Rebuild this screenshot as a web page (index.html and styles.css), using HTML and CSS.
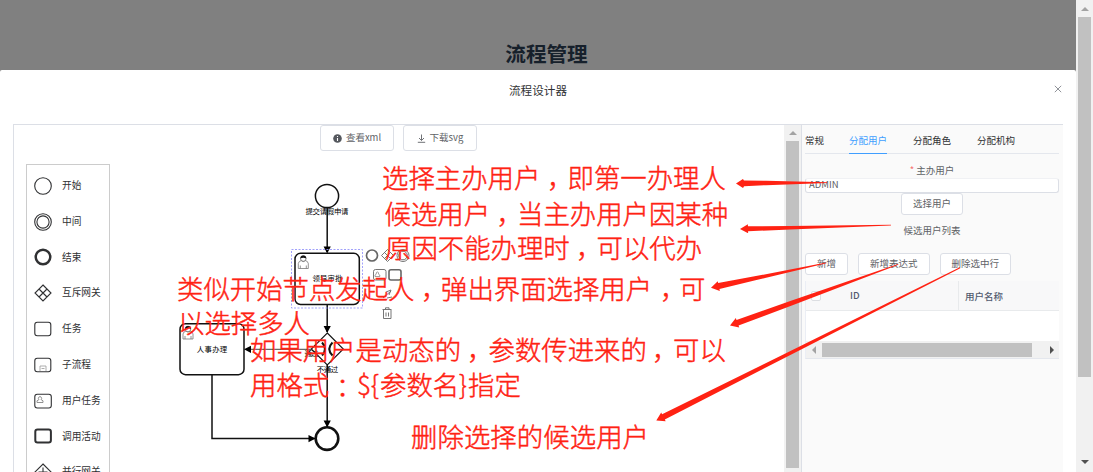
FILE: index.html
```html
<!DOCTYPE html>
<html lang="zh-CN">
<head>
<meta charset="utf-8">
<title>流程管理</title>
<link rel="stylesheet" href="styles.css">
</head>
<body>
<div class="window">
  <div class="page">
    <header class="page-head"><h1>流程管理</h1></header>
    <section class="dialog">
      <div class="dialog-head">
        <span class="dialog-title">流程设计器</span>
        <svg class="close" width="8" height="8" viewBox="0 0 8 8"><path d="M.8.8l6.4 6.4M7.2.8L.8 7.2"/></svg>
      </div>
      <div class="editor">
        <div class="canvas">
          <div class="toolbar">
            <button class="btn tool"><svg width="9" height="9" viewBox="0 0 9 9"><circle cx="4.5" cy="4.5" r="4.3" fill="#55585e"/><path d="M4.5 2v1M4.5 4v3" stroke="#fff" stroke-width="1.1"/></svg><span>查看xml</span></button>
            <button class="btn tool"><svg class="down" width="9" height="9" viewBox="0 0 9 9"><path d="M4.5.5v5.7M2 4l2.5 2.5L7 4M.8 8.3h7.4"/></svg><span>下载svg</span></button>
          </div>
          <ul class="palette">
            <li><svg viewBox="0 0 20 20"><circle cx="10" cy="10" r="8.3"/></svg>开始</li>
            <li><svg viewBox="0 0 20 20"><circle cx="10" cy="10" r="8.3"/><circle cx="10" cy="10" r="6.1"/></svg>中间</li>
            <li><svg viewBox="0 0 20 20"><circle cx="10" cy="10" r="7.3" stroke-width="2.5"/></svg>结束</li>
            <li><svg viewBox="0 0 20 20"><path d="M10 2l8 8-8 8-8-8zM6 6l8 8M14 6l-8 8"/></svg>互斥网关</li>
            <li><svg viewBox="0 0 20 20"><rect x="1.8" y="3.2" width="16" height="13.5" rx="2.5"/></svg>任务</li>
            <li><svg viewBox="0 0 20 20"><rect x="1.8" y="3.2" width="16" height="13.5" rx="2.5"/><path d="M7 16v-5h6v5M8.5 13.5h3" stroke="#999" stroke-width=".8"/></svg>子流程</li>
            <li><svg viewBox="0 0 20 20"><rect x="1.8" y="3.2" width="16.5" height="13.8" rx="2.5"/><path d="M4 11.5V9.8l2-1.3a1.6 1.6 0 1 1 2 0l2 1.3v1.7z" stroke="#777" stroke-width=".8"/></svg>用户任务</li>
            <li><svg viewBox="0 0 20 20"><rect x="2.3" y="3.4" width="15.6" height="13.2" rx="2.3" stroke-width="2"/></svg>调用活动</li>
            <li><svg viewBox="0 0 20 20"><path d="M10 2l8 8-8 8-8-8zM10 5.500v9M5.500 10h9"/></svg>并行网关</li>
          </ul>
          <svg class="diagram" width="770" height="347" viewBox="14 125 770 347">
            <defs>
              <g id="person"><path d="M-5 6.500V1.500Q-4.500-1-2-1.500Q0 .8 2-1.500Q4.500-1 5 1.500V6.500zM-3 6.500v-3M3 6.500v-3" fill="#fff" stroke="#777" stroke-width=".8"/><circle cy="-3.500" r="2.800" fill="#fff" stroke="#555" stroke-width=".7"/><path d="M-2.900-3.500Q-3-6.500 0-6.500T2.900-3.500Q0-5-2.900-3.500z" fill="#111"/></g>
            </defs>
            <g class="shape">
              <circle cx="327" cy="196" r="11.600"/>
              <rect x="295" y="253.300" width="64.300" height="51.200" rx="5.500"/>
              <rect x="180" y="323.700" width="64" height="51" rx="5.500"/>
              <path d="M327.300 333l16 16-16 16-16-16z" stroke-width="1.100"/>
              <circle cx="327" cy="438.600" r="11.300" stroke-width="2.600"/>
              <path d="M327.200 208v44M327.200 305v27M327.200 365v61M212 375v63.500h103"/>
              <path d="M311 349.300h-64" stroke-width=".8"/>
              <path d="M322 342.500q6 6.500 0 13M332.500 342.500q-6.500 6.500 0 13" stroke-width="2"/>
            </g>
            <path class="tip" d="M323.600 246.500h7.200l-3.600 7zM323.600 326h7.200l-3.600 7zM323.600 420.500h7.200l-3.600 7zM308.500 435v7.200l7-3.600zM251 345.700v7.200l-7-3.600z"/>
            <rect class="selection" x="291.500" y="249.500" width="71" height="58.500"/>
            <use href="#person" x="303.300" y="262"/>
            <use href="#person" x="188" y="332.500"/>
            <g class="node-text">
              <text x="327" y="213.800" textLength="43">提交请假申请</text>
              <text x="327.500" y="281.200" textLength="30">领导审批</text>
              <text x="212" y="352.200" textLength="30.500">人事办理</text>
              <text x="311.500" y="355.500" textLength="14">通过</text>
              <text x="327.500" y="372" textLength="21.500">不通过</text>
            </g>
            <g class="pad">
              <circle cx="372" cy="255.500" r="5.500" stroke-width="1.700"/>
              <path d="M387.500 249.500l6 6-6 6-6-6zM384.500 252.500l6 6M390.500 252.500l-6 6"/>
              <circle cx="403" cy="255.500" r="6"/><circle cx="403" cy="255.500" r="4.300"/>
              <rect x="373.500" y="269.500" width="12.500" height="10.500" rx="2"/>
              <path d="M375 276.500v-1.500l1.500-1a1.200 1.200 0 1 1 1.800 0l1.500 1v1.500z" stroke-width=".6"/>
              <rect x="389" y="269.800" width="12" height="10.200" rx="2" stroke-width="1.600"/>
              <path d="M383 298l8-7M386 292l5-2-2 5M387 298l5-1" />
              <path d="M382.500 309.500h9M385.500 309.300v-1.500h3.500v1.500M383.500 310v8.500h7.500V310M386 312.500v4M388.500 312.500v4"/>
            </g>
          </svg>
        </div>
        <div class="scroll-v inner"><i class="up"></i><b></b></div>
        <aside class="props">
          <nav class="tabs"><a>常规</a><a class="active">分配用户</a><a>分配角色</a><a>分配机构</a></nav>
          <label class="field-label"><em>*</em> 主办用户</label>
          <div class="input">ADMIN</div>
          <button class="btn choose">选择用户</button>
          <div class="list-title">候选用户列表</div>
          <div class="actions"><button class="btn">新增</button><button class="btn">新增表达式</button><button class="btn">删除选中行</button></div>
          <div class="table">
            <div class="thead"><span class="check"><i></i></span><span class="id">ID</span><span class="name">用户名称</span></div>
            <div class="tbody"></div>
            <div class="scroll-h"><i class="left"></i><b></b><i class="right"></i></div>
          </div>
        </aside>
      </div>
    </section>
  </div>
  <div class="scroll-v outer"><i class="up"></i><b></b><i class="dn"></i></div>
</div>
<svg class="notes" width="1093" height="472" viewBox="0 0 1093 472">
  <path transform="translate(736 183.500) rotate(-.6)" d="M0 0L7-4.500L8-3L30-2.500L91-.4V.4L30 2L8 2.800L7 4.500z"/>
  <path transform="translate(740 229) rotate(-1.500)" d="M0 0L8-4.500V-2.500L50-1.800L151-.4V.4L50 1.800L8 2.500V4.500z"/>
  <path transform="translate(711 287.700) rotate(-12.100)" d="M0 0L8-5V-3L45-2L118-.4V.4L45 2L8 3V5z"/>
  <path transform="translate(730 325.500) rotate(-20)" d="M0 0L8-5V-3L65-2.300L179-.4V.4L65 2.300L8 3V5z"/>
  <path transform="translate(656.300 420.500) rotate(-26.700)" d="M0 0L8-5V-3L120-2L340-.5V.5L120 2L8 3V5z"/>
  <g class="note-text">
    <text x="382" y="187.500">选择主办用户</text><text x="547" y="187.500">，</text><text x="567.500" y="187.500">即第一办理人</text>
    <text x="384.500" y="224">候选用户</text><text x="496.500" y="224">，</text><text x="517" y="224">当主办用户因某种</text>
    <text x="385" y="257.500">原因不能办理时</text><text x="576" y="257.500">，</text><text x="596.500" y="257.500">可以代办</text>
    <text x="177" y="299">类似开始节点发起人</text><text x="421" y="299">，</text><text x="441" y="299">弹出界面选择用户</text><text x="660" y="299">，</text><text x="679" y="299">可</text>
    <text x="178" y="333">以选择多人</text>
    <text x="250" y="360">如果用户是动态的</text><text x="467" y="360">，</text><text x="488.500" y="360">参数传进来的</text><text x="652" y="360">，</text><text x="673" y="360">可以</text>
    <text x="250" y="394.500">用格式</text><text x="336" y="395.500">：</text><text x="357" y="394.500" textLength="22" lengthAdjust="spacingAndGlyphs">${</text><text x="380" y="394.500">参数名</text><text x="459" y="394.500" textLength="8" lengthAdjust="spacingAndGlyphs">}</text><text x="468" y="394.500">指定</text>
    <text x="411" y="446.500" textLength="238">删除选择的候选用户</text>
  </g>
</svg>
</body>
</html>
```
FILE: styles.css
```css
* { box-sizing: border-box; }
body {
  margin: 0;
  position: relative;
  height: 472px;
  overflow: hidden;
  background: #fff;
  color: #303133;
  font: 9.5px/1 "Noto Sans CJK SC", sans-serif;
}
.window { display: flex; height: 472px; }
.page { display: flex; flex-direction: column; width: 1076px; background: #808080; }
.page-head { height: 70px; padding-top: 39px; padding-left: 17px; text-align: center; }
.page-head h1 { margin: 0; font-size: 20.6px; line-height: 28px; color: #16202b; }
.dialog { display: flex; flex-direction: column; flex: 1; background: #fff; border-radius: 2px 2px 0 0; }
.dialog-head { display: flex; height: 54px; justify-content: center; padding-top: 13px; position: relative; }
.dialog-title { font-size: 11.6px; line-height: 15px; }
.close { position: absolute; right: 14px; top: 15px; fill: none; stroke: #909399; stroke-width: 1; }
.editor {
  display: grid;
  grid-template-columns: 770px 17px 262px;
  flex: 1;
  margin-left: 13px;
  border-top: 1px solid #dcdfe6;
  border-left: 1px solid #dcdfe6;
  width: 1050px;
  height: 348px;
}
.canvas { position: relative; height: 347px; overflow: hidden; }
.btn {
  font: inherit;
  color: #606266;
  height: 22px;
  padding: 0 11px;
  background: #fff;
  border: 1px solid #dcdfe6;
  border-radius: 3px;
  white-space: nowrap;
}
.toolbar { display: flex; gap: 9px; width: 157px; margin-left: 306px; }
.tool { display: flex; flex: 1; align-items: center; justify-content: center; gap: 4px; height: 26px; padding: 0; }
.down { fill: none; stroke: #606266; stroke-width: .9; }
.palette {
  width: 84px;
  height: 330px;
  margin: 13px 0 0 12px;
  padding: 3px 0 0 6px;
  border: 1px solid #ccc;
  list-style: none;
}
.palette li { display: flex; align-items: center; gap: 9px; height: 35.8px; font-size: 9.7px; }
.palette svg { width: 20px; height: 20px; fill: none; stroke: #303133; stroke-width: 1.1; }
.diagram { position: absolute; left: 0; top: 0; }
.shape { fill: none; stroke: #111; stroke-width: 1.5; }
.tip { fill: #000; }
.selection { fill: none; stroke: #9696fa; stroke-width: .9; stroke-dasharray: 2 1.5; }
.node-text { fill: #000; font-size: 7.4px; text-anchor: middle; }
.pad { fill: none; stroke: #666; stroke-width: .9; }
.scroll-v { display: flex; flex-direction: column; align-items: center; background: #f1f1f1; width: 17px; }
.scroll-v b { width: 13px; background: #c1c1c1; }
.scroll-v i { width: 0; height: 0; border: 4px solid transparent; }
.scroll-v .up { border-bottom-color: #a3a3a3; border-top: 0; }
.scroll-v .dn { border-top-color: #505050; border-bottom: 0; }
.inner .up { margin: 6px 0; }
.inner b { height: 327px; }
.outer .up { margin: 7px 0 6px; }
.outer b { height: 360px; }
.outer .dn { margin-top: 83px; }
.props { padding: 0 4px 0 3px; background: #fafafa; border-left: 1px solid #dcdfe6; display: flex; flex-direction: column; }
.tabs { display: flex; gap: 26px; height: 29px; line-height: 30px; border-bottom: 1px solid #e4e7ed; }
.tabs a:first-child { margin-right: -1px; }
.tabs .active { color: #409eff; height: 29px; border-bottom: 1px solid #409eff; }
.field-label { margin-top: 9px; height: 15px; line-height: 14px; text-align: center; color: #606266; }
.field-label em { color: #f56c6c; font-style: normal; }
.input { height: 15px; line-height: 11px; padding-left: 3px; background: #fff; border: 1px solid #dcdfe6; border-top-color: #f0f1f4; border-radius: 3px; color: #606266; }
.choose { align-self: center; width: 62px; }
.list-title { margin-top: 7px; height: 18px; line-height: 17px; text-align: center; color: #606266; }
.actions { display: flex; gap: 10px; margin-top: 13px; }
.table { margin-top: 6px; border-left: 1px solid #ebeef5; border-bottom: 1px solid #e4e7ed; }
.thead { display: flex; height: 30px; align-items: center; background: #f8f8f9; border-bottom: 1px solid #e8eaec; color: #515a6e; font-weight: 500; }
.check { width: 44px; padding-left: 5px; }
.check i { display: block; width: 10px; height: 10px; border: 1px solid #dcdee2; border-radius: 2px; background: #fff; }
.id { width: 108px; }
.name { height: 29px; line-height: 30px; padding-left: 6px; border-left: 1px solid #e8eaec; }
.tbody { height: 30px; background: #fff; }
.scroll-h { display: flex; align-items: center; height: 17px; background: #f1f1f1; }
.scroll-h b { width: 210px; height: 14px; background: #c1c1c1; }
.scroll-h i { width: 0; height: 0; border: 4px solid transparent; }
.scroll-h .left { border-right-color: #a3a3a3; border-left: 0; margin: 0 6px; }
.scroll-h .right { border-left-color: #505050; border-right: 0; margin-left: 18px; }
.notes { position: absolute; left: 0; top: 0; fill: #ff2213; }
.note-text { font-size: 26.4px; font-weight: 300; stroke: #ff2213; stroke-width: .45; }
```
